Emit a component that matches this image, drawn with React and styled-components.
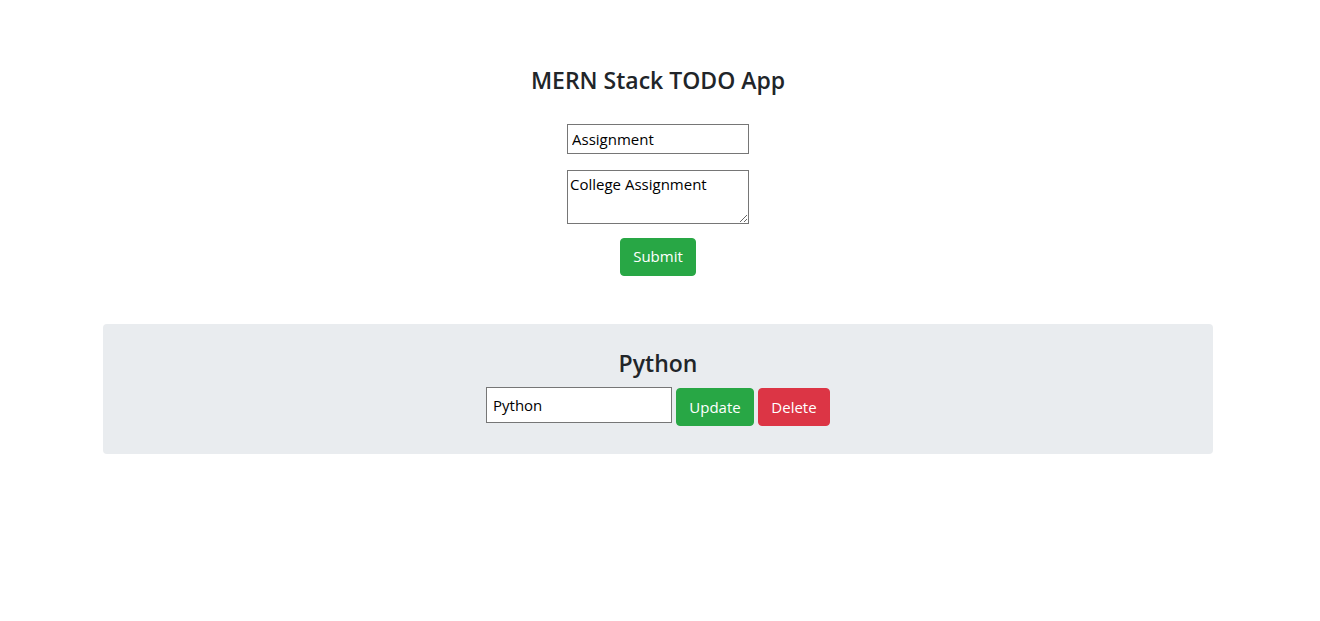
import React, { useState } from 'react';
import styled, { createGlobalStyle } from 'styled-components';

const GlobalStyle = createGlobalStyle`
  * { box-sizing: border-box; }
  body {
    margin: 0;
    background: #ffffff;
    color: #212529;
    font-family: 'Open Sans', 'Noto Sans', sans-serif;
  }
`;

const Page = styled.div`
  width: 1316px;
  padding-top: 67px;
`;

const FormArea = styled.form`
  display: flex;
  flex-direction: column;
  align-items: center;
`;

const Title = styled.h4`
  margin: 0 0 29px;
  font-size: 23px;
  font-weight: 600;
  line-height: 1.2;
`;

const TextInput = styled.input`
  width: ${p => p.$width || 182}px;
  height: ${p => p.$height || 30}px;
  padding: 0 4px;
  border: 1px solid #767676;
  border-radius: 0;
  background: #fff;
  font-family: inherit;
  font-size: 15px;
  color: #000;
  outline: none;
`;

const TextArea = styled.textarea`
  width: 182px;
  height: 54px;
  margin-top: 16px;
  padding: 4px 2px;
  border: 1px solid #767676;
  font-family: inherit;
  font-size: 15px;
  line-height: 1.3;
  color: #000;
  outline: none;
`;

const Button = styled.button`
  height: 38px;
  padding: 0 12px;
  border: 1px solid ${p => (p.$variant === 'danger' ? '#dc3545' : '#28a745')};
  border-radius: 4px;
  background: ${p => (p.$variant === 'danger' ? '#dc3545' : '#28a745')};
  color: #fff;
  font-family: inherit;
  font-size: 15px;
  line-height: 1.5;
  cursor: pointer;
`;

const SubmitButton = styled(Button)`
  margin-top: 14px;
  width: 76px;
`;

const List = styled.div`
  width: 1110px;
  margin: 48px 0 0 103px;
`;

const TodoCard = styled.div`
  background: #e9ecef;
  border-radius: 4px;
  padding: 26px 0 28px;
  display: flex;
  flex-direction: column;
  align-items: center;
`;

const TodoTitle = styled.h3`
  margin: 0 0 10px;
  font-size: 23px;
  font-weight: 600;
  line-height: 1.2;
`;

const EditRow = styled.div`
  display: flex;
  align-items: flex-start;
  gap: 4px;
  & > button { margin-top: 1px; }
`;

export default function App() {
  const [title, setTitle] = useState('Assignment');
  const [desc, setDesc] = useState('College Assignment');
  const [edit, setEdit] = useState('Python');

  return (
    <Page>
      <GlobalStyle />
      <FormArea onSubmit={e => e.preventDefault()}>
        <Title>MERN Stack TODO App</Title>
        <TextInput value={title} onChange={e => setTitle(e.target.value)} />
        <TextArea value={desc} onChange={e => setDesc(e.target.value)} />
        <SubmitButton type="submit">Submit</SubmitButton>
      </FormArea>
      <List>
        <TodoCard>
          <TodoTitle>Python</TodoTitle>
          <EditRow>
            <TextInput $width={186} $height={36} style={{ paddingLeft: 6 }} value={edit} onChange={e => setEdit(e.target.value)} />
            <Button type="button" style={{ width: 78 }}>Update</Button>
            <Button type="button" $variant="danger" style={{ width: 72 }}>Delete</Button>
          </EditRow>
        </TodoCard>
      </List>
    </Page>
  );
}
